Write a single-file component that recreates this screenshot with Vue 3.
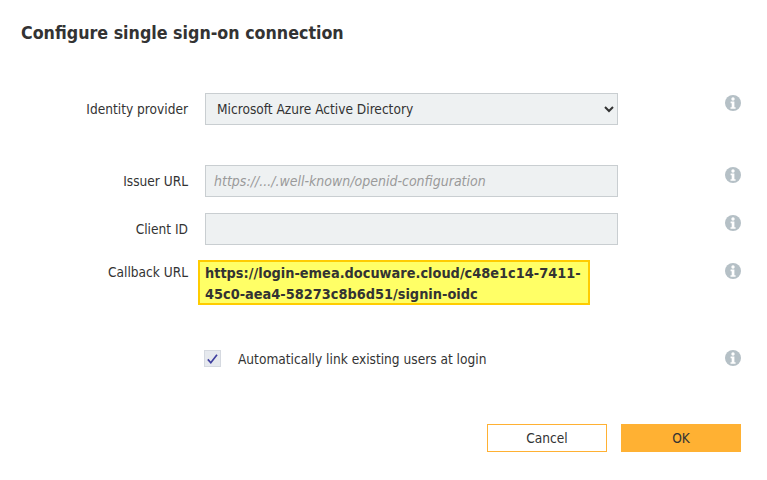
<script setup>
const infoPath = 'M8 0a8 8 0 1 0 0 16A8 8 0 0 0 8 0z'
const glyph = 'M5.6 6.6h3.8v5.6h1.2v1.6H5.5v-1.6h1.2V8.2H5.6z'
</script>

<template>
  <div class="dialog">
    <h1 class="title">Configure single sign-on connection</h1>

    <div class="row row-provider">
      <label class="label">Identity provider</label>
      <select class="control select">
        <option>Microsoft Azure Active Directory</option>
      </select>
      <svg class="info" viewBox="0 0 16 16"><path :d="infoPath" fill="#b5c0c6"/><circle cx="8" cy="4" r="1.7" fill="#fff"/><path :d="glyph" fill="#fff"/></svg>
    </div>

    <div class="row row-issuer">
      <label class="label">Issuer URL</label>
      <input class="control input" placeholder="https://.../.well-known/openid-configuration" />
      <svg class="info" viewBox="0 0 16 16"><path :d="infoPath" fill="#b5c0c6"/><circle cx="8" cy="4" r="1.7" fill="#fff"/><path :d="glyph" fill="#fff"/></svg>
    </div>

    <div class="row row-client">
      <label class="label">Client ID</label>
      <input class="control input" />
      <svg class="info" viewBox="0 0 16 16"><path :d="infoPath" fill="#b5c0c6"/><circle cx="8" cy="4" r="1.7" fill="#fff"/><path :d="glyph" fill="#fff"/></svg>
    </div>

    <div class="row row-callback">
      <label class="label">Callback URL</label>
      <div class="callback">https://login-emea.docuware.cloud/c48e1c14-7411-<br />45c0-aea4-58273c8b6d51/signin-oidc</div>
      <svg class="info" viewBox="0 0 16 16"><path :d="infoPath" fill="#b5c0c6"/><circle cx="8" cy="4" r="1.7" fill="#fff"/><path :d="glyph" fill="#fff"/></svg>
    </div>

    <div class="row row-check">
      <span></span>
      <div class="check-wrap">
        <span class="checkbox">
          <svg viewBox="0 0 16 16" width="16" height="16"><path d="M3 8.4l3.2 3.6 6.6-8.6" fill="none" stroke="#3f3f9f" stroke-width="1.8"/></svg>
        </span>
        <span class="check-label">Automatically link existing users at login</span>
      </div>
      <svg class="info" viewBox="0 0 16 16"><path :d="infoPath" fill="#b5c0c6"/><circle cx="8" cy="4" r="1.7" fill="#fff"/><path :d="glyph" fill="#fff"/></svg>
    </div>

    <div class="actions">
      <button class="btn cancel">Cancel</button>
      <button class="btn ok">OK</button>
    </div>
  </div>
</template>

<style>
html, body { margin: 0; background: #fff; }
</style>

<style scoped>
.dialog {
  width: 767px;
  height: 480px;
  box-sizing: border-box;
  padding-top: 23px;
  font-family: "DejaVu Sans", sans-serif;
  font-stretch: condensed;
  font-size: 13.6px;
  color: #333;
  overflow: hidden;
}
.title {
  margin: 0 0 0 21px;
  font-size: 17.7px;
  line-height: 21px;
  font-weight: 700;
  color: #333;
}
.row {
  display: grid;
  grid-template-columns: 188px 413px 16px;
  column-gap: 17px;
  align-items: start;
}
.row > .info { margin-left: 90px; margin-top: 2px; }
.row-provider { margin-top: 49px; }
.row-issuer { margin-top: 40px; }
.row-client { margin-top: 16px; }
.row-callback { margin-top: 15px; }
.row-callback > .info { margin-top: 3px; }
.row-check { margin-top: 44px; }
.row-check > .info { margin-top: 1px; }
.label {
  text-align: right;
  line-height: 32px;
}
.row-callback .label { line-height: 24px; }
.control {
  box-sizing: border-box;
  width: 413px;
  height: 32px;
  margin: 0;
  border: 1px solid #c9ced1;
  border-radius: 0;
  background: #eef1f2;
  font: inherit;
  font-stretch: condensed;
  color: #333;
  outline: none;
}
.select { padding: 0 7px; }
.input { padding: 0 8px; font-size: 14px; }
.input::placeholder { color: #9a9a9a; font-style: italic; }
.info { width: 16px; height: 16px; display: block; }
.callback {
  box-sizing: border-box;
  width: 392px;
  height: 45px;
  margin-left: -7px;
  padding: 1px 5px;
  border: 2px solid #ffcc00;
  background: #ffff66;
  font-weight: 700;
  font-size: 14.4px;
  line-height: 21px;
  white-space: nowrap;
}
.check-wrap { display: flex; align-items: center; height: 18px; }
.checkbox {
  box-sizing: border-box;
  width: 17px;
  height: 17px;
  margin: 1px 0 0 -1px;
  background: #e6e9ee;
  border: 1px solid #d5d9e0;
  display: flex;
  align-items: center;
  justify-content: center;
  flex: none;
}
.check-label { margin: 2px 0 0 17px; }
.actions {
  display: flex;
  justify-content: flex-end;
  gap: 14px;
  margin-top: 57px;
  padding-right: 26px;
}
.btn {
  box-sizing: border-box;
  width: 120px;
  height: 28px;
  border-radius: 0;
  font: inherit;
  font-stretch: condensed;
  color: #333;
  padding: 0;
}
.cancel { background: #fff; border: 1px solid #ffb133; }
.ok { background: #ffb133; border: 1px solid #ffb133; }
</style>
